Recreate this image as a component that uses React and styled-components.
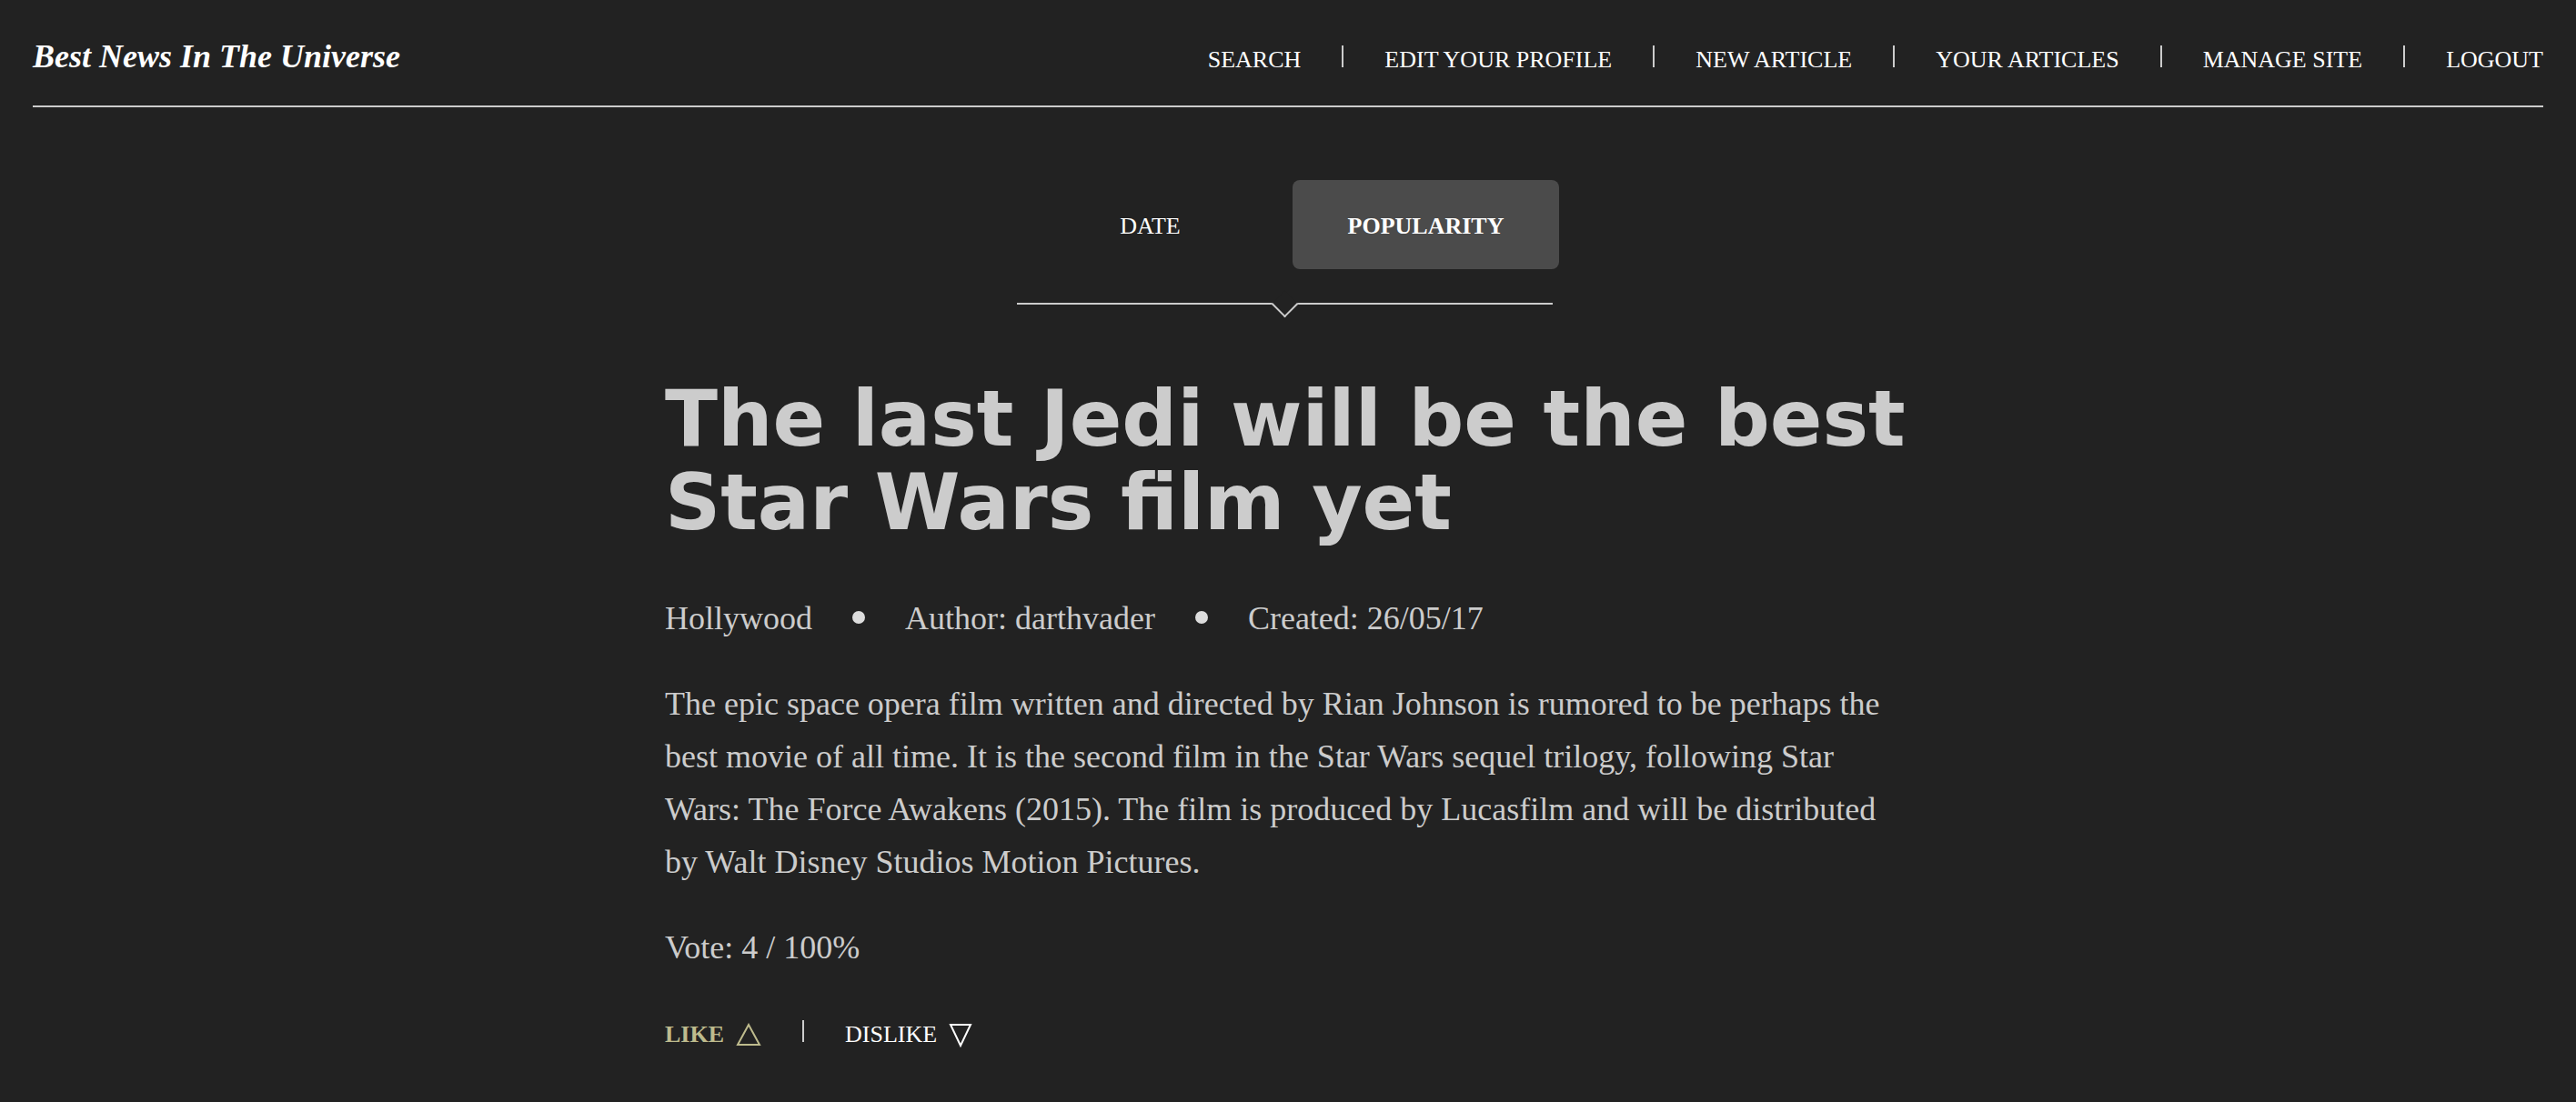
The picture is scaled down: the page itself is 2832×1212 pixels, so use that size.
import React from 'react';
import styled, { createGlobalStyle } from 'styled-components';

const GlobalStyle = createGlobalStyle`
  html, body {
    margin: 0;
    padding: 0;
    background-color: #222222;
  }
  body {
    font-family: "Liberation Serif", "Times New Roman", serif;
    color: #cccccc;
  }
`;

// page
const Page = styled.div`
  min-height: 1212px;
  padding: 0 36px;
  background-color: #222222;
`;

// header
const Header = styled.header`
  display: flex;
  align-items: baseline;
  justify-content: space-between;
  padding: 44px 0 36px;
  border-bottom: 2px solid #cccccc;
`;

const Logo = styled.a`
  font-size: 36px;
  line-height: 36px;
  font-weight: bold;
  font-style: italic;
  color: #ffffff;
  text-decoration: none;
`;

const Nav = styled.nav`
  display: flex;
  align-items: baseline;
  gap: 45px;
`;

const NavLink = styled.a`
  font-size: 26px;
  line-height: 26px;
  color: #ffffff;
  text-decoration: none;
  text-transform: uppercase;
`;

const Divider = styled.span`
  display: inline-block;
  width: 2px;
  height: ${(props) => props.$height || 24}px;
  background-color: #cccccc;
`;

// sort tabs
const Sorter = styled.div`
  width: fit-content;
  margin: 80px auto 0;
`;

const Tabs = styled.div`
  display: flex;
  gap: 10px;
`;

const Tab = styled.button`
  width: 293px;
  height: 98px;
  padding: 4px 0 0;
  border: none;
  border-radius: 8px;
  font-family: "Liberation Serif", "Times New Roman", serif;
  font-size: 26px;
  line-height: 94px;
  color: #ffffff;
  text-transform: uppercase;
  cursor: pointer;
  background-color: ${(props) => (props.$active ? '#4b4b4b' : 'transparent')};
  font-weight: ${(props) => (props.$active ? 'bold' : 'normal')};
`;

const TabLine = styled.div`
  position: relative;
  height: 2px;
  margin-top: 37px;
  margin-right: 7px;
  background-color: #cccccc;

  &::after {
    content: '';
    position: absolute;
    left: 50%;
    top: -9px;
    width: 19px;
    height: 19px;
    margin-left: -11px;
    background-color: #222222;
    border-right: 2px solid #cccccc;
    border-bottom: 2px solid #cccccc;
    transform: rotate(45deg);
  }
`;

// article
const Article = styled.article`
  width: 1370px;
  margin: 80px auto 0;
`;

const Title = styled.h1`
  margin: 0;
  font-family: "DejaVu Sans", Verdana, sans-serif;
  font-weight: bold;
  font-size: 85px;
  line-height: 92px;
  color: #cccccc;
`;

const Meta = styled.div`
  display: flex;
  align-items: center;
  gap: 44px;
  margin-top: 52px;
  font-size: 36px;
  line-height: 58px;
  color: #cccccc;
`;

const Dot = styled.span`
  width: 14px;
  height: 14px;
  margin-top: -2px;
  border-radius: 50%;
  background-color: #dddddd;
`;

const Text = styled.p`
  margin: 36px 0 0;
  font-size: 36px;
  line-height: 58px;
  color: #cccccc;
`;

const Votes = styled.div`
  display: flex;
  align-items: baseline;
  gap: 45px;
  margin-top: 49px;
`;

const VoteButton = styled.button`
  display: inline-flex;
  align-items: baseline;
  gap: 13px;
  padding: 0;
  border: none;
  background: none;
  cursor: pointer;
  font-family: "Liberation Serif", "Times New Roman", serif;
  font-size: 26px;
  line-height: 36px;
  text-transform: uppercase;
  color: ${(props) => (props.$active ? '#bebb8d' : '#ffffff')};
  font-weight: ${(props) => (props.$active ? 'bold' : 'normal')};

  svg {
    align-self: center;
  }
`;

const Triangle = function(props) {
  const points = props.down ? '2,2 24,2 13,25' : '14,2 26,24 2,24';
  return (
    <svg width={props.down ? 26 : 28} height={props.down ? 27 : 26} viewBox={props.down ? '0 0 26 27' : '0 0 28 26'}>
      <polygon points={points} fill="none" stroke="currentColor" strokeWidth="2" strokeLinejoin="miter" />
    </svg>
  );
};

const navItems = ['Search', 'Edit your profile', 'New article', 'Your articles', 'Manage site', 'Logout'];

export default function App() {
  return (
    <Page>
      <GlobalStyle />
      <Header>
        <Logo href="#">Best News In The Universe</Logo>
        <Nav>
          {navItems.map((item, i) => (
            <React.Fragment key={item}>
              {i > 0 && <Divider />}
              <NavLink href="#">{item}</NavLink>
            </React.Fragment>
          ))}
        </Nav>
      </Header>

      <Sorter>
        <Tabs>
          <Tab>Date</Tab>
          <Tab $active>Popularity</Tab>
        </Tabs>
        <TabLine />
      </Sorter>

      <Article>
        <Title>The last Jedi will be the best Star Wars film yet</Title>
        <Meta>
          <span>Hollywood</span>
          <Dot />
          <span>Author: darthvader</span>
          <Dot />
          <span>Created: 26/05/17</span>
        </Meta>
        <Text>
          The epic space opera film written and directed by Rian Johnson is rumored to be perhaps the best movie of
          all time. It is the second film in the Star Wars sequel trilogy, following Star Wars: The Force Awakens
          (2015). The film is produced by Lucasfilm and will be distributed by Walt Disney Studios Motion Pictures.
        </Text>
        <Text>Vote: 4 / 100%</Text>
        <Votes>
          <VoteButton $active>
            Like <Triangle />
          </VoteButton>
          <Divider $height={24} />
          <VoteButton>
            Dislike <Triangle down />
          </VoteButton>
        </Votes>
      </Article>
    </Page>
  );
}
